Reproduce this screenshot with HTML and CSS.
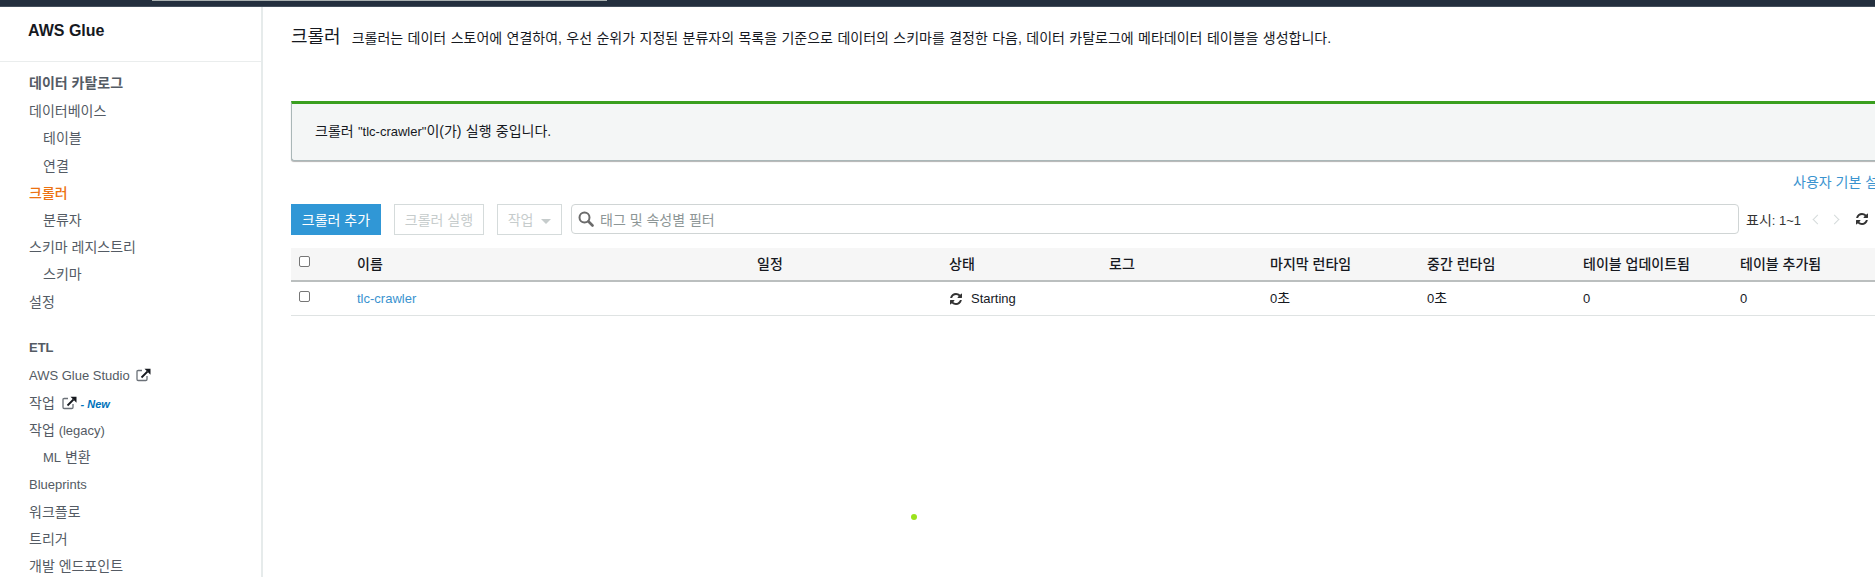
FILE: index.html
```html
<!DOCTYPE html>
<html lang="ko">
<head>
  <meta charset="UTF-8" />
  <meta name="viewport" content="width=device-width, initial-scale=1.0" />
  <title>AWS Glue 크롤러</title>
  <link rel="stylesheet" href="styles.css">
</head>
<body>
  <svg class="icon-defs" xmlns="http://www.w3.org/2000/svg">
    <symbol id="icon-refresh" viewBox="0 0 1792 1792">
      <path d="M1639 1056q0 5-1 7-64 268-268 434.5t-478 166.5q-146 0-282.5-55t-243.5-157l-129 129q-19 19-45 19t-45-19-19-45v-448q0-26 19-45t45-19h448q26 0 45 19t19 45-19 45l-137 137q71 66 161 102t187 36q134 0 250-65t186-179q11-17 53-117 8-23 30-23h192q13 0 22.5 9.5t9.5 22.5zm25-800v448q0 26-19 45t-45 19h-448q-26 0-45-19t-19-45 19-45l138-138q-148-137-349-137-134 0-250 65t-186 179q-11 17-53 117-8 23-30 23h-199q-13 0-22.5-9.5t-9.5-22.5v-7q65-268 270-434.5t480-166.5q146 0 284 55.5t245 156.5l130-129q19-19 45-19t45 19 19 45z"/>
    </symbol>
    <symbol id="icon-external" viewBox="0 0 15 14">
      <path d="M6 2.500H2.200Q1 2.500 1 3.700v7.600q0 1.200 1.200 1.200h7.600q1.200 0 1.200-1.200V8" fill="none" stroke="#6b7178" stroke-width="1.300"/>
      <path d="M5.500 9.500l6-6" fill="none" stroke="#16191f" stroke-width="1.800"/>
      <path d="M8.500 0.800H14.500V6.800Z" fill="#16191f"/>
    </symbol>
  </svg>

  <div class="topbar"><div class="topbar-tab"></div></div>

  <div class="layout">
    <aside class="sidebar">
      <div class="brand">AWS Glue</div>
      <nav class="nav">
        <div class="nav-title">데이터 카탈로그</div>
        <a class="nav-item">데이터베이스</a>
        <a class="nav-item sub">테이블</a>
        <a class="nav-item sub">연결</a>
        <a class="nav-item active">크롤러</a>
        <a class="nav-item sub">분류자</a>
        <a class="nav-item">스키마 레지스트리</a>
        <a class="nav-item sub">스키마</a>
        <a class="nav-item">설정</a>
        <div class="nav-title section en">ETL</div>
        <a class="nav-item en">AWS Glue Studio <svg class="icon-ext"><use href="#icon-external"/></svg></a>
        <a class="nav-item">작업 <svg class="icon-ext"><use href="#icon-external"/></svg> <span class="new-tag">- New</span></a>
        <a class="nav-item">작업 <span class="en">(legacy)</span></a>
        <a class="nav-item sub"><span class="en">ML</span> 변환</a>
        <a class="nav-item en">Blueprints</a>
        <a class="nav-item">워크플로</a>
        <a class="nav-item">트리거</a>
        <a class="nav-item">개발 엔드포인트</a>
      </nav>
    </aside>

    <main class="content">
      <div class="page-head">
        <h1>크롤러</h1>
        <p>크롤러는 데이터 스토어에 연결하여, 우선 순위가 지정된 분류자의 목록을 기준으로 데이터의 스키마를 결정한 다음, 데이터 카탈로그에 메타데이터 테이블을 생성합니다.</p>
      </div>

      <div class="alert">크롤러 <span class="en">"tlc-crawler"</span>이(가) 실행 중입니다.</div>

      <div class="prefs"><a class="prefs-link">사용자 기본 설정</a></div>

      <div class="toolbar">
        <button class="btn btn-primary">크롤러 추가</button>
        <button class="btn btn-disabled">크롤러 실행</button>
        <button class="btn btn-disabled btn-action">작업 <span class="caret"></span></button>
        <div class="search">
          <svg class="icon-search" viewBox="0 0 16 16"><circle cx="6.500" cy="6.500" r="5" fill="none" stroke="#6b6b6b" stroke-width="2"/><path d="M10.500 10.500l4 4" stroke="#6b6b6b" stroke-width="2.600" stroke-linecap="round"/></svg>
          <span>태그 및 속성별 필터</span>
        </div>
        <div class="pager">
          <span>표시<span class="en">: 1~1</span></span>
          <span class="chevrons"><i class="chev chev-left"></i><i class="chev chev-right"></i></span>
          <svg class="icon-refresh"><use href="#icon-refresh"/></svg>
        </div>
      </div>

      <div class="table">
        <div class="row head">
          <div><span class="check"></span></div>
          <div>이름</div>
          <div>일정</div>
          <div>상태</div>
          <div>로그</div>
          <div>마지막 런타임</div>
          <div>중간 런타임</div>
          <div>테이블 업데이트됨</div>
          <div>테이블 추가됨</div>
        </div>
        <div class="row body">
          <div><span class="check"></span></div>
          <div class="en"><a class="link">tlc-crawler</a></div>
          <div></div>
          <div class="status en"><svg class="icon-status"><use href="#icon-refresh"/></svg>Starting</div>
          <div></div>
          <div class="runtime"><span class="en">0</span>초</div>
          <div class="runtime"><span class="en">0</span>초</div>
          <div class="en">0</div>
          <div class="en">0</div>
        </div>
      </div>
    </main>
  </div>

  <div class="dot"></div>
</body>
</html>
```

FILE: styles.css
```css
* {
  box-sizing: border-box;
  margin: 0;
  padding: 0;
}
html, body {
  height: 577px;
  overflow: hidden;
}
body {
  background: #fff;
  color: #16191f;
  font-family: "Liberation Sans", "Noto Sans CJK KR", sans-serif;
  font-size: 14px;
  position: relative;
}
/* hangul runs a bit wide in the original, latin stays at 13px */
.en {
  font-size: 13px;
}
.icon-defs {
  display: none;
}
.topbar {
  height: 7px;
  background: #232f3e;
  border-bottom: 1px solid #444f5c;
}
.topbar-tab {
  width: 455px;
  height: 1px;
  margin-left: 152px;
  background: #a9b0b0;
}
.layout {
  display: flex;
  height: 570px;
}
.sidebar {
  flex: 0 0 263px;
  border-right: 2px solid #e6ebeb;
  color: #545b64;
}
.brand {
  height: 55px;
  padding: 15px 0 0 28px;
  border-bottom: 1px solid #eaeded;
  color: #16191f;
  font-size: 16px;
  font-weight: bold;
}
.nav {
  padding-top: 8px;
}
.nav-item, .nav-title {
  display: block;
  height: 27.2px;
  line-height: 29px;
  padding-left: 29px;
  white-space: nowrap;
}
.nav-title {
  line-height: 27px;
  font-weight: bold;
}
.nav-title.section {
  margin-top: 20px;
  line-height: 25px;
}
.nav-item.en {
  line-height: 27px;
}
.nav-item.sub {
  padding-left: 43px;
}
.nav-item.active {
  color: #ec7211;
  font-weight: 500;
}
.icon-ext {
  width: 15px;
  height: 14px;
  margin-left: 3px;
  vertical-align: -2px;
}
.new-tag {
  color: #0073bb;
  font-size: 11px;
  font-style: italic;
  font-weight: bold;
}
.content {
  flex: 1;
  min-width: 0;
  padding: 15px 0 0 28px;
}
.page-head {
  display: flex;
  align-items: flex-start;
  gap: 11px;
  height: 79px;
  white-space: nowrap;
}
.page-head h1 {
  font-size: 18px;
  font-weight: normal;
}
.page-head p {
  padding-top: 5px;
  font-size: 14px;
  word-spacing: 0.5px;
}
.alert {
  width: 1640px;
  height: 60px;
  padding-left: 23px;
  line-height: 55px;
  word-spacing: 0.4px;
  background: #f4f6f6;
  border-top: 3px solid #3a9f1f;
  border-left: 1px solid #aab7b8;
  border-bottom: 1px solid #aab7b8;
  border-radius: 0 0 3px 3px;
  box-shadow: 0 1px 1px rgba(0, 0, 0, 0.3);
}
.prefs {
  height: 42px;
  padding: 10px 0 0 1502px;
  white-space: nowrap;
}
.prefs-link, .link {
  color: #3a93cf;
}
.toolbar {
  display: flex;
  align-items: center;
  height: 32px;
  white-space: nowrap;
}
.btn {
  flex: none;
  height: 31px;
  width: 90px;
  margin-right: 13px;
  border: 1px solid #d5dbdb;
  background: #fff;
  font: inherit;
}
.btn-primary {
  background: #3097d6;
  border-color: #3097d6;
  color: #fff;
}
.btn-disabled {
  color: #c6cccc;
}
.btn-action {
  width: 65px;
  margin-right: 9px;
}
.caret {
  display: inline-block;
  margin-left: 4px;
  vertical-align: 1px;
  border-left: 5px solid transparent;
  border-right: 5px solid transparent;
  border-top: 5px solid #c6cccc;
}
.search {
  display: flex;
  align-items: center;
  flex: none;
  width: 1168px;
  height: 30px;
  padding-left: 6px;
  border: 1px solid #d0d5d5;
  border-radius: 4px;
  color: #8d9696;
}
.icon-search {
  width: 16px;
  height: 16px;
  margin-right: 6px;
}
.pager {
  display: flex;
  flex: none;
  align-items: center;
  padding-left: 7px;
  color: #333;
}
.chevrons {
  display: flex;
  gap: 10px;
  margin: 0 17px 0 13px;
}
.chev {
  display: block;
  width: 7px;
  height: 7px;
  border-left: 1px solid #d5dbdb;
  border-bottom: 1px solid #d5dbdb;
}
.chev-left {
  transform: rotate(45deg);
}
.chev-right {
  transform: rotate(225deg);
}
.icon-refresh {
  width: 14px;
  height: 14px;
  fill: #333;
  flex: none;
}
.table {
  width: 1700px;
  margin-top: 13px;
}
.row {
  display: grid;
  grid-template-columns: 66px 400px 192px 160px 161px 157px 156px 157px 151px;
  align-items: center;
}
.row.head {
  height: 34px;
  padding-bottom: 2px;
  background: #f6f6f6;
  border-bottom: 2px solid #bbbfbf;
  font-weight: 500;
}
.row.body {
  height: 34px;
  border-bottom: 1px solid #dfe3e3;
}
.runtime {
  padding-bottom: 4px;
}
.check {
  display: block;
  width: 11px;
  height: 11px;
  margin: 0 0 4px 8px;
  border: 1px solid #767676;
  border-radius: 2px;
  background: #fff;
}
.status {
  display: flex;
  align-items: center;
  gap: 8px;
}
.icon-status {
  width: 14px;
  height: 14px;
  fill: #333;
}
.dot {
  position: absolute;
  left: 911px;
  top: 514px;
  width: 6px;
  height: 6px;
  border-radius: 50%;
  background: #9be21c;
}
```
